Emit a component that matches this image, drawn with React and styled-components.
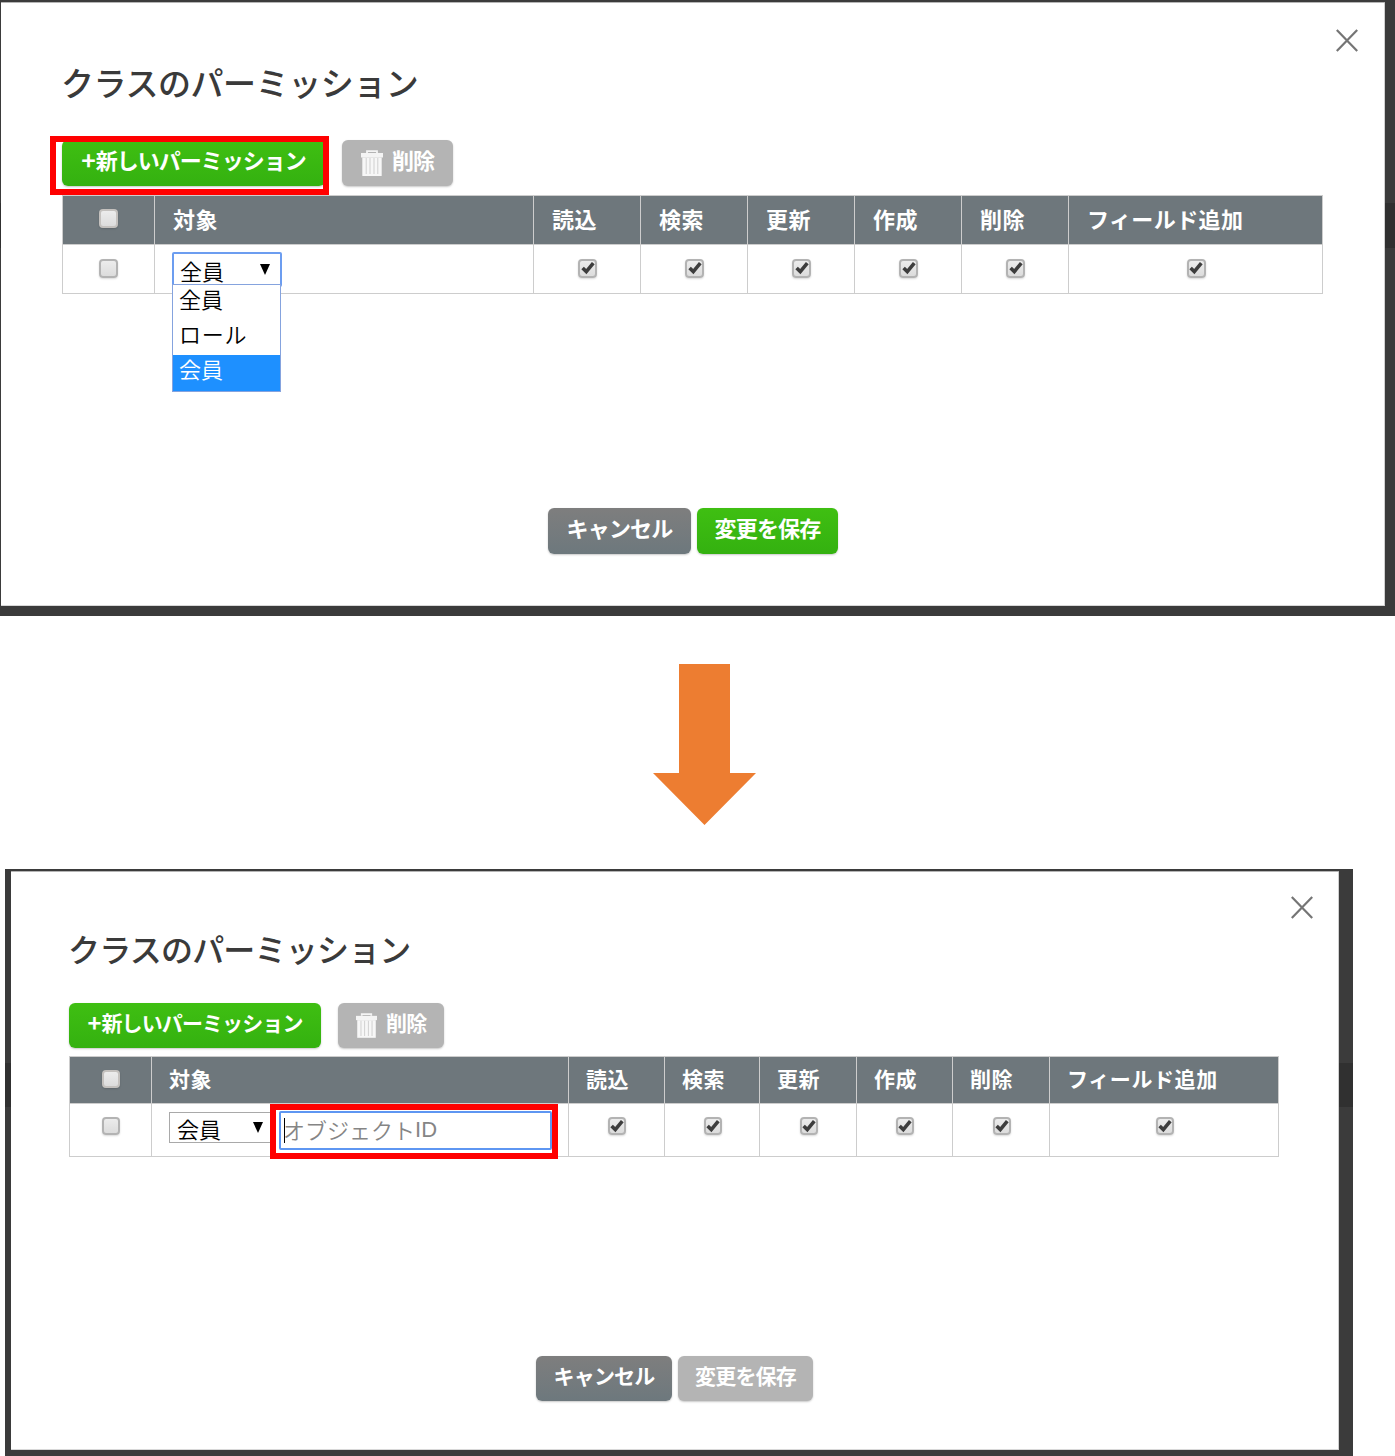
import React from "react";
import styled, { createGlobalStyle, ThemeProvider, css } from "styled-components";

const GlobalStyle = createGlobalStyle`
  *, *::before, *::after { box-sizing: border-box; }
  body {
    margin: 0;
    background: #fff;
    font-family: "Noto Sans CJK JP", "Noto Sans", sans-serif;
  }
`;

const wide = {
  screen: { width: 1395, height: 616, margin: "0", padding: "2px 10px 10px 1px", stripTop: 203, stripHeight: 45 },
  content: "0 62px 0 61px",
  close: { top: 27, right: 27 },
  title: { size: 33, spacing: -0.45, top: 56, height: 48 },
  toolbar: { top: 34, gap: 17, bottom: 9 },
  button: { height: 46, font: 22, lift: 9 },
  add: { width: 263, spacing: -1 },
  del: { width: 111, spacing: -0.9, icon: 22, gap: 9, left: 19 },
  table: { columns: "91px 378px 106px 106px 106px 106px 106px 253px", rows: "48px 48px", font: 22, spacing: 0.4, pad: 18, lift: 5 },
  box: 19,
  rowLift: 2,
  target: 7,
  selectWidth: 110,
  selectHeight: 35,
  footer: { top: 214, left: 486, gap: 6 },
  cancel: { width: 143, spacing: -0.8 },
  save: { width: 141, spacing: -0.8 },
};

const narrow = {
  screen: { width: 1348, height: 587, margin: "0 0 0 5px", padding: "2px 14px 6px 6px", stripTop: 194, stripHeight: 44 },
  content: "0 59px 0 58px",
  close: { top: 25, right: 26 },
  title: { size: 32, spacing: -0.8, top: 54, height: 46 },
  toolbar: { top: 32, gap: 17, bottom: 8 },
  button: { height: 45, font: 21, lift: 8 },
  add: { width: 252, spacing: -0.9 },
  del: { width: 106, spacing: -0.8, icon: 21, gap: 9, left: 18 },
  table: { columns: "81px 416px 95px 94px 96px 95px 96px 228px", rows: "46px 52px", font: 21, spacing: 0.6, pad: 17, lift: 4 },
  box: 18,
  rowLift: 8,
  target: 8,
  selectWidth: 106,
  selectHeight: 31,
  footer: { top: 199, left: 467, gap: 6 },
  cancel: { width: 136, spacing: -0.8 },
  save: { width: 135, spacing: -0.8 },
};

const Page = styled.main`
  width: 1395px;
  height: 1456px;
  overflow: hidden;
  background: #fff;
`;

const Screen = styled.section`
  position: relative;
  width: ${(p) => p.theme.screen.width}px;
  height: ${(p) => p.theme.screen.height}px;
  margin: ${(p) => p.theme.screen.margin};
  padding: ${(p) => p.theme.screen.padding};
  background: linear-gradient(#303030, #303030) 0 ${(p) => p.theme.screen.stripTop}px / 100%
    ${(p) => p.theme.screen.stripHeight}px no-repeat #3b3b3b;
`;

const Dialog = styled.div`
  position: relative;
  height: 100%;
  padding: ${(p) => p.theme.content};
  background: #fff;
  box-shadow: inset 0 1px 0 #b5b5b5, inset -1px 0 0 #d0d0d0, inset 0 -1px 0 #d8d8d8;
`;

const CloseButton = styled.button`
  position: absolute;
  top: ${(p) => p.theme.close.top}px;
  right: ${(p) => p.theme.close.right}px;
  width: 22px;
  height: 23px;
  padding: 0;
  border: 0;
  background: none;
  svg { display: block; }
`;

const Title = styled.h1`
  margin: 0 0 0 -1px;
  padding-top: ${(p) => p.theme.title.top}px;
  font-size: ${(p) => p.theme.title.size}px;
  line-height: ${(p) => p.theme.title.height}px;
  letter-spacing: ${(p) => p.theme.title.spacing}px;
  font-weight: 500;
  color: #3a3a3a;
  white-space: nowrap;
`;

const Toolbar = styled.div`
  display: flex;
  gap: ${(p) => p.theme.toolbar.gap}px;
  padding: ${(p) => p.theme.toolbar.top}px 0 ${(p) => p.theme.toolbar.bottom}px;
`;

const tones = {
  green: css`background: linear-gradient(#3fbf12, #34b110);`,
  slate: css`background: linear-gradient(#7e7e7e, #6d787d);`,
  muted: css`background: #b4b4b4;`,
};

const Button = styled.button`
  display: flex;
  align-items: center;
  justify-content: ${(p) => (p.$left ? "flex-start" : "center")};
  gap: ${(p) => p.$gap || 0}px;
  width: ${(p) => p.$width}px;
  height: ${(p) => p.theme.button.height}px;
  padding: 0 0 ${(p) => p.theme.button.lift}px ${(p) => p.$left || 0}px;
  border: 0;
  border-radius: 6px;
  box-shadow: 0 1px 2px rgba(0, 0, 0, 0.22);
  font: 700 ${(p) => p.theme.button.font}px/32px "Noto Sans CJK JP", sans-serif;
  letter-spacing: ${(p) => p.$spacing}px;
  color: #fff;
  white-space: nowrap;
  ${(p) => tones[p.$tone]}
  svg { flex: none; margin-top: 9px; }
`;

const Plus = styled.span`
  margin-right: 1px;
  font-size: 1.12em;
  line-height: 32px;
`;

const Table = styled.div`
  display: grid;
  width: max-content;
  grid-template-columns: ${(p) => p.theme.table.columns};
  grid-template-rows: ${(p) => p.theme.table.rows};
  gap: 1px;
  padding: 1px;
  background: #cdcdcd;
`;

const HeadCell = styled.div`
  display: flex;
  align-items: center;
  justify-content: ${(p) => (p.$center ? "center" : "flex-start")};
  padding: 0 0 ${(p) => (p.$center ? 3 : p.theme.table.lift)}px ${(p) => (p.$center ? 0 : p.theme.table.pad)}px;
  background: #6e777c;
  color: #fff;
  font-size: ${(p) => p.theme.table.font}px;
  font-weight: 700;
  line-height: 32px;
  letter-spacing: ${(p) => p.theme.table.spacing}px;
  white-space: nowrap;
`;

const CheckCell = styled.div`
  display: flex;
  align-items: center;
  justify-content: center;
  padding: 0 0 ${(p) => p.theme.rowLift}px ${(p) => p.$shift || 0}px;
  background: #fff;
`;

const TargetCell = styled.div`
  display: flex;
  align-items: flex-start;
  padding: ${(p) => p.theme.target}px 0 0 17px;
  background: #fff;
`;

const Box = styled.span`
  display: flex;
  align-items: center;
  justify-content: center;
  width: ${(p) => p.theme.box}px;
  height: ${(p) => p.theme.box}px;
  border: 2px solid ${(p) => (p.$onDark ? "#c4c1be" : "#b3b3b3")};
  border-radius: 4px;
  background: linear-gradient(#ececec, #dcdcdc);
  box-shadow: 0 1px 2px rgba(0, 0, 0, 0.15);
  svg { flex: none; }
`;

const SelectWrap = styled.div`
  position: relative;
  flex: none;
`;

const SelectField = styled.div`
  display: flex;
  justify-content: space-between;
  width: ${(p) => p.theme.selectWidth}px;
  height: ${(p) => p.theme.selectHeight}px;
  padding: ${(p) => (p.$open ? "2px 10px 0 6px" : "1px 11px 0 7px")};
  border: ${(p) => (p.$open ? "2px solid #6c9df0" : "1px solid #a9a9a9")};
  border-radius: ${(p) => (p.$open ? 2 : 0)}px;
  background: #fff;
  color: #000;
  font-size: 22px;
  font-weight: 350;
  line-height: 29px;
  svg { margin-top: ${(p) => (p.$open ? 8 : 8)}px; }
`;

const Options = styled.ul`
  position: absolute;
  z-index: 2;
  top: 32px;
  left: 0;
  width: 109px;
  height: 108px;
  margin: 0;
  padding: 0;
  border: 1px solid #85a3de;
  background: #fff;
  list-style: none;
`;

const Option = styled.li`
  height: 35px;
  padding-left: 6px;
  font-size: 22px;
  font-weight: 350;
  line-height: 26px;
  letter-spacing: ${(p) => p.$spacing || 0}px;
  color: ${(p) => (p.$active ? "#fff" : "#000")};
  background: ${(p) => (p.$active ? "#1e90ff" : "transparent")};
  &:last-child { height: 36px; }
`;

const ObjectField = styled.div`
  display: flex;
  align-items: center;
  width: 273px;
  height: 39px;
  margin: -1px 0 0 4px;
  padding: 0 0 3px 3px;
  border: 2px solid #5e96f2;
  border-radius: 2px;
  background: #fff;
  color: #858585;
  font-size: 22px;
  font-weight: 350;
  line-height: 34px;
  white-space: nowrap;
`;

const Caret = styled.span`
  width: 1px;
  height: 25px;
  margin: 2px -2px 0 0;
  background: #000;
`;

const Latin = styled.span`
  padding-top: 1px;
  font-family: "Liberation Sans", sans-serif;
  font-weight: 400;
`;

const Footer = styled.div`
  display: flex;
  gap: ${(p) => p.theme.footer.gap}px;
  padding: ${(p) => p.theme.footer.top}px 0 0 ${(p) => p.theme.footer.left}px;
`;

const Highlight = styled.div`
  position: absolute;
  z-index: 3;
  top: ${(p) => p.$top}px;
  left: ${(p) => p.$left}px;
  width: ${(p) => p.$width}px;
  height: ${(p) => p.$height}px;
  border: 6px solid #f00;
  pointer-events: none;
`;

const ArrowRow = styled.div`
  height: 253px;
  padding: 48px 0 0 653px;
  svg { display: block; }
`;

const CloseIcon = () => (
  <svg width="22" height="23" viewBox="0 0 22 23" fill="none" stroke="#757575" strokeWidth="2.2">
    <path d="M0.8 1 21.2 22M21.2 1 0.8 22" />
  </svg>
);

const TrashIcon = ({ size }) => (
  <svg width={size} height={size * 1.2} viewBox="0 0 22 26.4" fill="none">
    <path d="M6 3V1.2H16V3" stroke="#f4f4f4" strokeWidth="1.8" />
    <path d="M0 3H22V7.5H0Z" fill="#f4f4f4" />
    <path d="M1.3 7.5H20.7V26H1.3Z" fill="#f7f7f7" />
    <path d="M5.2 8V24M9 8V24M13 8V24M16.8 8V24" stroke="#d3d3d3" strokeWidth="1.1" />
  </svg>
);

const Check = () => (
  <svg width="14" height="14" viewBox="0 0 14 14" fill="none">
    <path d="M1.6 7 5.3 10.6 12.3 2.2" stroke="#3d3d3d" strokeWidth="3.6" />
  </svg>
);

const Triangle = () => (
  <svg width="10" height="11" viewBox="0 0 10 11">
    <path d="M0 0H10L5 11Z" fill="#000" />
  </svg>
);

const flags = ["読込", "検索", "更新", "作成", "削除", "フィールド追加"];

function PermissionDialog({ theme, saveTone, target, highlight }) {
  return (
    <ThemeProvider theme={theme}>
      <Screen>
        <Dialog>
          <CloseButton><CloseIcon /></CloseButton>
          <Title>クラスのパーミッション</Title>
          <Toolbar>
            <Button $tone="green" $width={theme.add.width} $spacing={theme.add.spacing}>
              <Plus>+</Plus>新しいパーミッション
            </Button>
            <Button
              $tone="muted"
              $width={theme.del.width}
              $spacing={theme.del.spacing}
              $left={theme.del.left}
              $gap={theme.del.gap}
            >
              <TrashIcon size={theme.del.icon} />
              削除
            </Button>
          </Toolbar>
          <Table>
            <HeadCell $center><Box $onDark /></HeadCell>
            <HeadCell>対象</HeadCell>
            {flags.map((flag) => <HeadCell key={flag}>{flag}</HeadCell>)}
            <CheckCell><Box /></CheckCell>
            <TargetCell>{target}</TargetCell>
            {flags.map((flag) => (
              <CheckCell key={flag} $shift={1}><Box><Check /></Box></CheckCell>
            ))}
          </Table>
          <Footer>
            <Button $tone="slate" $width={theme.cancel.width} $spacing={theme.cancel.spacing}>キャンセル</Button>
            <Button $tone={saveTone} $width={theme.save.width} $spacing={theme.save.spacing}>変更を保存</Button>
          </Footer>
        </Dialog>
        {highlight}
      </Screen>
    </ThemeProvider>
  );
}

export default function App() {
  return (
    <Page>
      <GlobalStyle />
      <PermissionDialog
        theme={wide}
        saveTone="green"
        highlight={<Highlight $top={136} $left={50} $width={279} $height={59} />}
        target={
          <SelectWrap>
            <SelectField $open>全員<Triangle /></SelectField>
            <Options>
              <Option>全員</Option>
              <Option $spacing={0.8}>ロール</Option>
              <Option $active>会員</Option>
            </Options>
          </SelectWrap>
        }
      />
      <ArrowRow>
        <svg width="103" height="161" viewBox="0 0 103 161">
          <path d="M26 0H77V109H103L51.5 161 0 109H26Z" fill="#ed7d31" />
        </svg>
      </ArrowRow>
      <PermissionDialog
        theme={narrow}
        saveTone="muted"
        highlight={<Highlight $top={235} $left={265} $width={288} $height={55} />}
        target={
          <>
            <SelectWrap>
              <SelectField>会員<Triangle /></SelectField>
            </SelectWrap>
            <ObjectField>
              <Caret />
              オブジェクト<Latin>ID</Latin>
            </ObjectField>
          </>
        }
      />
    </Page>
  );
}
